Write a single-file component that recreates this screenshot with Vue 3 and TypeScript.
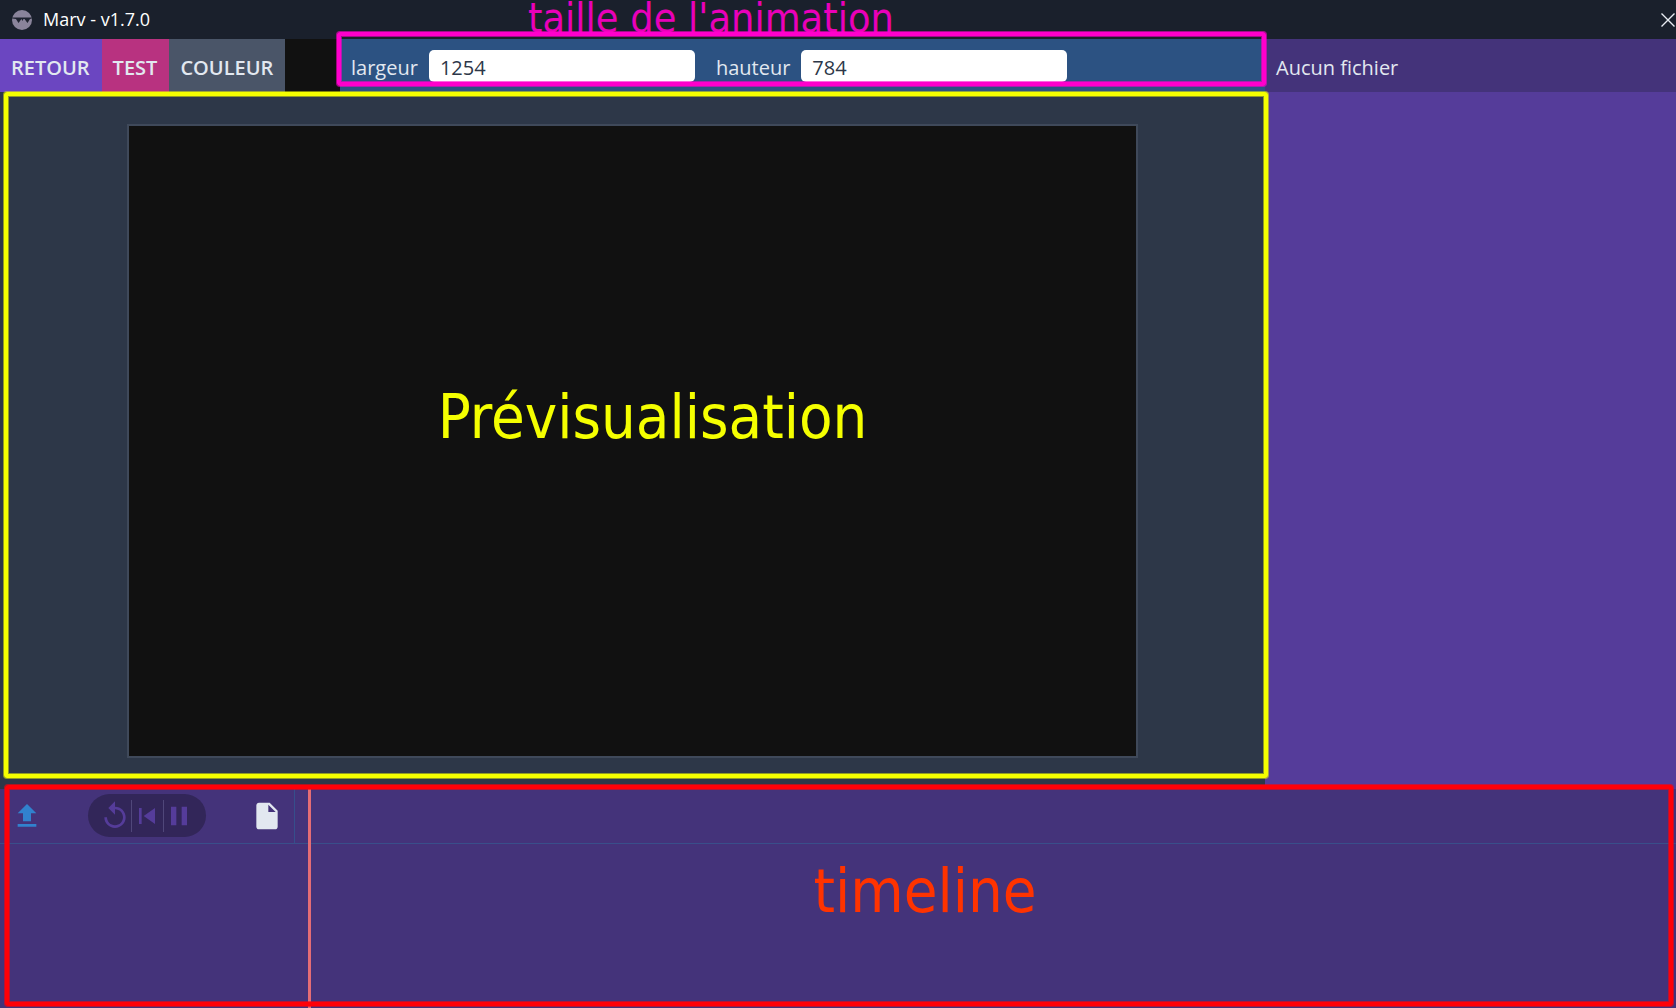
<script setup lang="ts">
import { ref } from 'vue'

const version = '1.7.0'
const width = ref<string>('1254')
const height = ref<string>('784')
</script>

<template>
  <div class="app">
    <header class="titlebar">
      <svg class="logo" viewBox="0 0 20 20" aria-hidden="true">
        <circle cx="10" cy="10" r="10" fill="#8a849b" />
        <path d="M0.300 7.500h19.400v1l-1.700 0.500-2.500 4-3-4h-1l-1 2-1-2-3 4-2.500-4L0.300 8.500z" fill="#1f2330" />
      </svg>
      <h1 class="title">Marv - v{{ version }}</h1>
      <button class="close" type="button" aria-label="Fermer">
        <svg viewBox="0 0 14 14"><path d="M0.500 0.500l13 13M13.500 0.500l-13 13" fill="none" stroke="#e8ecf2" stroke-width="1.400" /></svg>
      </button>
    </header>

    <div class="toolbar">
      <nav class="actions">
        <button class="btn back" type="button">RETOUR</button>
        <button class="btn test" type="button">TEST</button>
        <button class="btn color" type="button">COULEUR</button>
      </nav>
      <form class="size" @submit.prevent>
        <label class="size-label" for="w">largeur</label>
        <input id="w" v-model="width" class="size-input" type="text" />
        <label class="size-label" for="h">hauteur</label>
        <input id="h" v-model="height" class="size-input" type="text" />
        <div class="frame frame-size"></div>
        <span class="note note-size">taille de l'animation</span>
      </form>
      <div class="file">Aucun fichier</div>
    </div>

    <main class="main">
      <section class="stage">
        <div class="canvas"><span class="note note-preview">Prévisualisation</span></div>
        <div class="frame frame-preview"></div>
      </section>
      <aside class="panel"></aside>
    </main>

    <section class="timeline">
      <div class="controls">
        <div class="tools">
          <button class="icon upload" type="button" aria-label="Importer">
            <svg viewBox="0 0 24 24"><path d="M9 16h6v-6h4l-7-7-7 7h4zM5 18h14v2H5z" /></svg>
          </button>
          <div class="player">
            <button class="icon" type="button" aria-label="Recommencer">
              <svg viewBox="0 0 24 24"><path d="M12 5V1L7 6l5 5V7c3.310 0 6 2.690 6 6s-2.690 6-6 6-6-2.690-6-6H4c0 4.420 3.580 8 8 8s8-3.580 8-8-3.580-8-8-8z" /></svg>
            </button>
            <button class="icon" type="button" aria-label="Début">
              <svg viewBox="0 0 24 24"><path d="M6 6h2v12H6zM9.500 12l8.500 6V6z" /></svg>
            </button>
            <button class="icon" type="button" aria-label="Pause">
              <svg viewBox="0 0 24 24"><path d="M6 19h4V5H6zM14 5v14h4V5z" /></svg>
            </button>
          </div>
          <button class="icon doc" type="button" aria-label="Nouveau fichier">
            <svg viewBox="0 0 24 24"><path d="M6 2c-1.100 0-1.990.9-1.990 2L4 20c0 1.100.890 2 1.990 2H18c1.100 0 2-.9 2-2V8l-6-6H6zm7 7V3.500L18.500 9H13z" /></svg>
          </button>
        </div>
      </div>
      <div class="tracks"><span class="note note-timeline">timeline</span></div>
      <div class="playhead"></div>
      <div class="frame frame-timeline"></div>
    </section>
  </div>
</template>

<style>
body {
  margin: 0;
  background: #44337a;
}
</style>

<style scoped>
.app {
  display: flex;
  flex-direction: column;
  min-height: 100vh;
  overflow: hidden;
  color: #e2e8f0;
  font-family: "Open Sans", "Noto Sans", sans-serif;
  font-size: 20px;
}

.app *,
.app {
  box-sizing: border-box;
}

button {
  margin: 0;
  padding: 0;
  border: 0;
  background: none;
  color: inherit;
  font: inherit;
}

.titlebar {
  display: flex;
  align-items: center;
  height: 39px;
  padding-left: 12px;
  background: #1a202c;
}

.logo {
  width: 20px;
  height: 20px;
}

.title {
  flex: 1;
  margin: 0 0 0 11px;
  padding-bottom: 2px;
  color: #fff;
  font-size: 18px;
  font-weight: 400;
}

.close {
  width: 15px;
  height: 39px;
}

.close svg {
  display: block;
  width: 14px;
  height: 14px;
}

.toolbar {
  display: flex;
  height: 53px;
  background: #44337a;
}

.actions {
  display: flex;
  flex: 0 0 340px;
  background: #111;
}

.btn {
  padding: 3px 12px 0 11px;
  font-weight: 600;
}

.back {
  background: #6b46c1;
}

.test {
  background: #b83280;
}

.color {
  background: #4a5568;
}

.size {
  position: relative;
  display: flex;
  flex: 1;
  align-items: center;
  padding: 0 11px;
  background: #2c5282;
}

.size-label {
  margin-right: 11px;
  padding-top: 3px;
}

.size-input {
  width: 266px;
  height: 32px;
  margin: 0 21px 0 0;
  padding: 3px 11px 0;
  border: 0;
  border-radius: 5px;
  background: #fff;
  color: #2d3748;
  font: inherit;
}

.file {
  display: flex;
  flex: 0 0 411px;
  align-items: center;
  padding: 3px 0 0 11px;
}

.main {
  display: flex;
  flex: 1;
}

.stage {
  position: relative;
  display: flex;
  flex: 1;
  padding: 32px 127px 31px;
  background: #2d3748;
}

.canvas {
  display: flex;
  flex: 1;
  justify-content: center;
  padding: 247px 0 0 40px;
  border: 2px solid #3f495a;
  background: #111;
}

.panel {
  flex: 0 0 411px;
  background: #553c9a;
}

.timeline {
  position: relative;
  height: 219px;
  background: #44337a;
}

.controls {
  height: 55px;
  border-bottom: 1px solid #394f8a;
}

.tools {
  display: flex;
  align-items: center;
  justify-content: space-between;
  width: 295px;
  height: 54px;
  padding: 0 11px 1px;
  border-right: 1px solid #364f8b;
}

.icon {
  height: 32px;
}

.icon svg {
  display: block;
  width: 32px;
  height: 32px;
  fill: currentColor;
}

.upload {
  color: #3182ce;
}

.player {
  display: flex;
  padding: 6px 11px 5px;
  border-radius: 22px;
  background: #322659;
  color: #553c9a;
}

.player .icon + .icon {
  box-shadow: inset 1px 0 #50477a;
}

.playhead {
  position: absolute;
  top: 0;
  bottom: 0;
  left: 308px;
  width: 3px;
  background: #e56d75;
}

.tracks {
  padding: 3px 0 0 174px;
  text-align: center;
}

.note {
  font-family: "DejaVu Sans Condensed", "DejaVu Sans", sans-serif;
  font-size: 61px;
  line-height: 88px;
  white-space: nowrap;
}

.note-size {
  position: absolute;
  top: -51px;
  left: 188px;
  color: #e900b9;
  font-size: 41px;
  line-height: 60px;
}

.note-preview {
  color: #f5ff00;
}

.note-timeline {
  color: #ff3300;
}

.frame {
  position: absolute;
  z-index: 1;
  border: 4px solid var(--ink);
  border-radius: 3px;
  box-shadow: 0 0 0 1px var(--edge), inset 0 0 0 1px var(--edge);
  pointer-events: none;
}

.frame-size {
  --ink: #ff00cc;
  --edge: rgba(255, 0, 204, 0.6);
  inset: -7px -1px 6px -3px;
}

.frame-preview {
  --ink: #f5ff00;
  --edge: rgba(245, 255, 0, 0.5);
  inset: 0 -3px 11px 4px;
}

.frame-timeline {
  --ink: #ff0008;
  --edge: rgba(255, 0, 8, 0.6);
  inset: -4px 3px 2px 5px;
}
</style>
